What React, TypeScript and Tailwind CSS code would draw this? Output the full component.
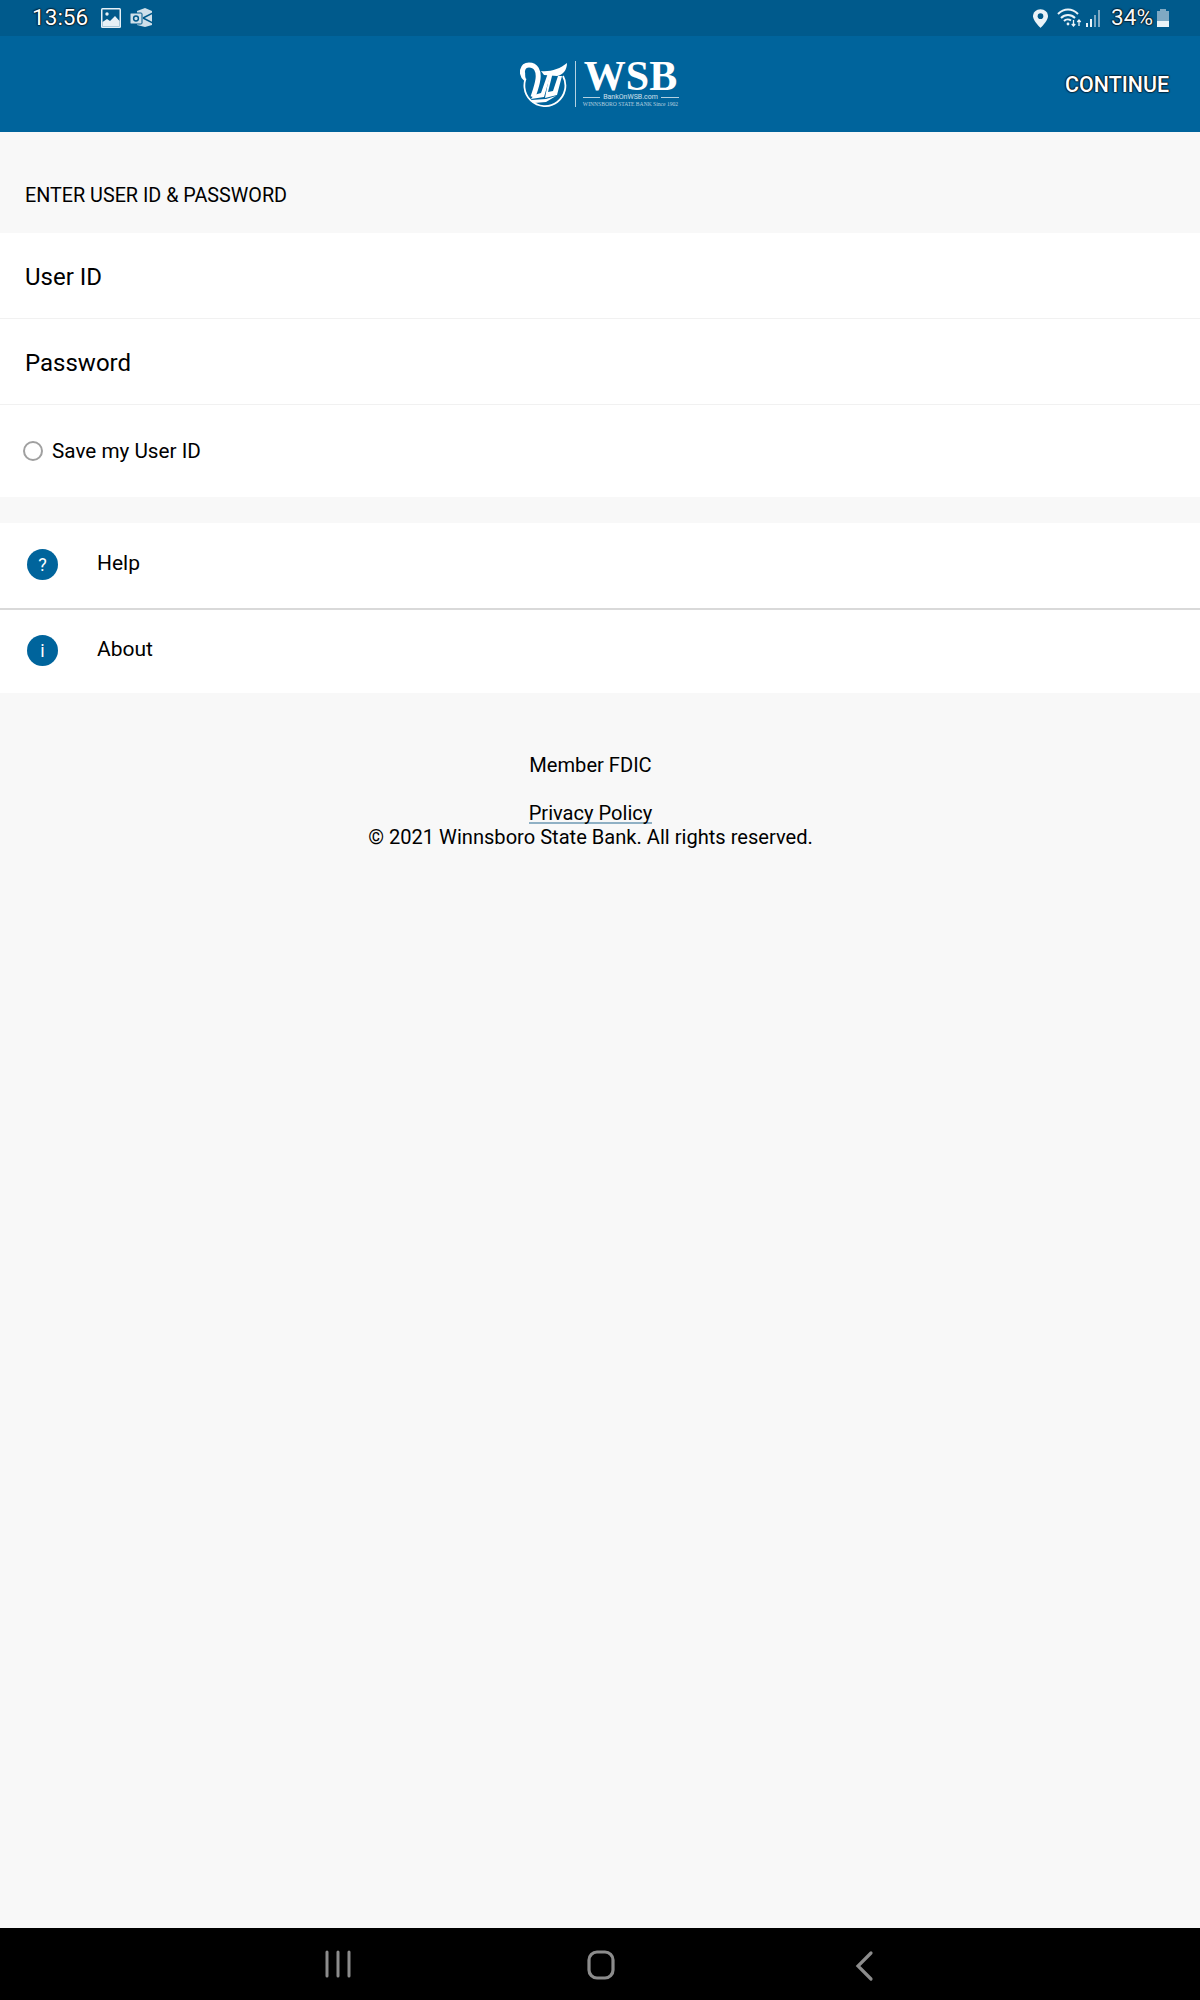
import React from 'react';

const font = { fontFamily: 'Roboto, "Liberation Sans", sans-serif' };

const WsbMark = () => (
  <svg viewBox="0 0 48 46" className="w-[48px] h-[46px]" fill="none">
    <path d="M8 13 A20.5 20.5 0 1 0 43 15" stroke="#fff" strokeWidth="1.8" />
    <path d="M6 18 C0 13 2 4 9 4 C16 4 19 10 18 18 C17 25 15 30 13 36" stroke="#fff" strokeWidth="5" />
    <path d="M6 18 C4 14 6 9 9 9 C12 9 13 13 12 17 Z" fill="#00649c" />
    <path d="M11 38 L24 36 L31 12 L28 12 L21 32 L14 34 Z" fill="#fff" />
    <path d="M25 37 L37 34 L42 15 L38 15 L33 30 L28 31 L33 11 L30 11 Z" fill="#fff" />
    <path d="M21 10 C30 11 40 8 47 2 C47 9 43 14 37 15 L24 14 Z" fill="#fff" />
    <path d="M11 39 L26 38 L36 35 L26 41 L14 42 Z" fill="#fff" />
  </svg>
);

const Logo = () => (
  <div className="flex items-center gap-[7px] ml-[-2px]">
    <WsbMark />
    <div className="w-px h-[46px] bg-white/70" />
    <div className="flex flex-col items-center w-[96px]">
      <span className="text-white text-[42px] leading-[33px] font-bold" style={{ fontFamily: '"Liberation Serif", serif' }}>
        WSB
      </span>
      <div className="flex items-center w-full gap-[3px]">
        <div className="flex-1 h-px bg-white/70" />
        <span className="text-white/80 text-[7px] leading-[8px]">BankOnWSB.com</span>
        <div className="flex-1 h-px bg-white/70" />
      </div>
      <span className="text-white/70 text-[5.6px] leading-[7px] whitespace-nowrap" style={{ fontFamily: '"Liberation Serif", serif' }}>
        WINNSBORO STATE BANK Since 1902
      </span>
    </div>
  </div>
);

const StatusBar = () => (
  <div className="h-9 bg-[#005a8c] flex items-center justify-between pl-[32px] pr-[31px] text-white shrink-0">
    <div className="flex items-center">
      <span className="text-[22.6px] leading-none [text-shadow:0_0_1px_#000,0_0_2px_#000,0_0_2px_#000]">13:56</span>
      <svg viewBox="0 0 20 20" className="w-[20px] h-[20px] ml-[13px]">
        <rect width="20" height="20" rx="1.5" fill="#e6f0f6" />
        <rect x="1.5" y="1.5" width="17" height="17" fill="#00598a" />
        <path d="M1.5 18.5 V14 L6 11 L9 13 L14 8 L18.5 13 V18.5 Z" fill="#e6f0f6" />
        <circle cx="6" cy="6" r="1.7" fill="#e6f0f6" />
      </svg>
      <svg viewBox="0 0 23 20" className="w-[23px] h-[20px] ml-[9px]">
        <path d="M7 3 L15 0 L22 3 L22 17 L15 19 L7 17 Z" fill="#cfe0ea" />
        <rect x="0" y="5" width="12" height="11" rx="1" fill="#cfe0ea" stroke="#00598a" />
        <circle cx="6" cy="10.5" r="2.4" fill="none" stroke="#00598a" strokeWidth="1.5" />
        <path d="M13 10 L23 5 M13 10 L23 15" stroke="#00598a" strokeWidth="1.5" />
      </svg>
    </div>
    <div className="flex items-center">
      <svg viewBox="0 0 16 20" className="w-[15px] h-[19px]">
        <path d="M8 0 C3.5 0 0 3.3 0 7.6 C0 12.5 8 20 8 20 C8 20 16 12.5 16 7.6 C16 3.3 12.5 0 8 0 Z" fill="#eaf3f8" />
        <circle cx="8" cy="7.5" r="3" fill="#00598a" />
      </svg>
      <svg viewBox="0 0 26 20" className="w-[26px] h-[20px] ml-[9px]" fill="none" stroke="#eaf3f8" strokeWidth="2">
        <path d="M1 6 C7 0 15 0 21 6" />
        <path d="M4 10 C8 6 14 6 18 10" />
        <path d="M7 13 C9 11 12 11 14 12.5" />
        <circle cx="11" cy="16" r="1.4" fill="#eaf3f8" stroke="none" />
        <path d="M16.5 12 V18 M14.8 16 L16.5 18 L18.2 16 M22 18 V12 M20.3 14 L22 12 L23.7 14" strokeWidth="1.3" />
      </svg>
      <div className="flex items-end gap-[2px] h-[17px] ml-[3px]">
        <div className="w-[2px] h-[4px] bg-[#eaf3f8]" />
        <div className="w-[2px] h-[8px] bg-[#eaf3f8]" />
        <div className="w-[2px] h-[12px] bg-[#7fa9c3]" />
        <div className="w-[2px] h-[17px] bg-[#7fa9c3]" />
      </div>
      <span className="text-[22.6px] leading-none ml-[11px] text-[#f4f8fa] [text-shadow:0_0_1px_#000,0_0_2px_#000,0_0_2px_#000]">34%</span>
      <div className="flex flex-col items-center ml-[4px] w-[12px]">
        <div className="w-[6px] h-[2px] bg-[#7fa9c3]" />
        <div className="w-[12px] h-[16px] bg-[#7fa9c3] flex flex-col justify-end">
          <div className="h-[6px] bg-[#eaf3f8]" />
        </div>
      </div>
    </div>
  </div>
);

const Header = () => (
  <div className="relative h-[96px] bg-[#00649c] flex items-center justify-center shrink-0">
    <Logo />
    <span className="absolute right-[31px] top-[37px] text-white text-[21.4px] leading-[24px] font-medium [text-shadow:0_0_1px_#000,0_0_2px_#000,0_0_2px_#000]">
      CONTINUE
    </span>
  </div>
);

const FieldRow = ({ label }: { label: string }) => (
  <div className="h-[86px] flex items-center pl-[25px] pt-[2px] border-b border-[#f1f1f1] text-[24px] text-black">
    {label}
  </div>
);

const MenuRow = ({ glyph, label, height }: { glyph: string; label: string; height: string }) => (
  <div className={`${height} flex items-center pl-[27px] pb-[3px] bg-white`}>
    <div className="w-[31px] h-[31px] rounded-full bg-[#00649c] text-white text-[18px] flex items-center justify-center">
      {glyph}
    </div>
    <span className="ml-[39px] mt-[-1px] text-[21px] text-black">{label}</span>
  </div>
);

const NavBar = () => (
  <div className="h-[72px] bg-black shrink-0 flex items-center">
    <svg className="mx-auto w-[600px] h-[72px]" viewBox="0 0 600 72" fill="none" stroke="#8c8c8c" strokeLinecap="round">
      <path d="M27 24 V48 M38 24 V48 M49 24 V48" strokeWidth="3" />
      <rect x="289" y="24" width="24" height="26" rx="8" strokeWidth="3.2" />
      <path d="M571 25 L558 38 L571 51" strokeWidth="3.2" />
    </svg>
  </div>
);

export default function App() {
  return (
    <div className="w-[1200px] h-[2000px] flex flex-col bg-[#f8f8f8]" style={font}>
      <StatusBar />
      <Header />
      <div className="flex-1">
        <div className="h-[101px] pl-[25px] pt-[51px] text-[19.75px] leading-[26px] text-black">
          ENTER USER ID &amp; PASSWORD
        </div>
        <div className="bg-white">
          <FieldRow label="User ID" />
          <FieldRow label="Password" />
          <div className="h-[92px] flex items-center pl-[23px]">
            <div className="w-[20px] h-[20px] rounded-full border-2 border-[#a0a0a0]" />
            <span className="ml-[9px] mt-[2px] text-[20.7px] text-black">Save my User ID</span>
          </div>
        </div>
        <div className="h-[26px]" />
        <MenuRow glyph="?" label="Help" height="h-[85px]" />
        <div className="h-[2px] bg-[#d9d9d9]" />
        <MenuRow glyph="i" label="About" height="h-[83px]" />
        <div className="w-[1181px] flex flex-col items-center pt-[59px] text-[20.1px] text-black">
          <span className="leading-[26px]">Member FDIC</span>
          <span className="leading-[24px] mt-[23px] border-b-2 border-[#8fb0c4] h-[23px]">Privacy Policy</span>
          <span className="leading-[26px]">© 2021 Winnsboro State Bank. All rights reserved.</span>
        </div>
      </div>
      <NavBar />
    </div>
  );
}
